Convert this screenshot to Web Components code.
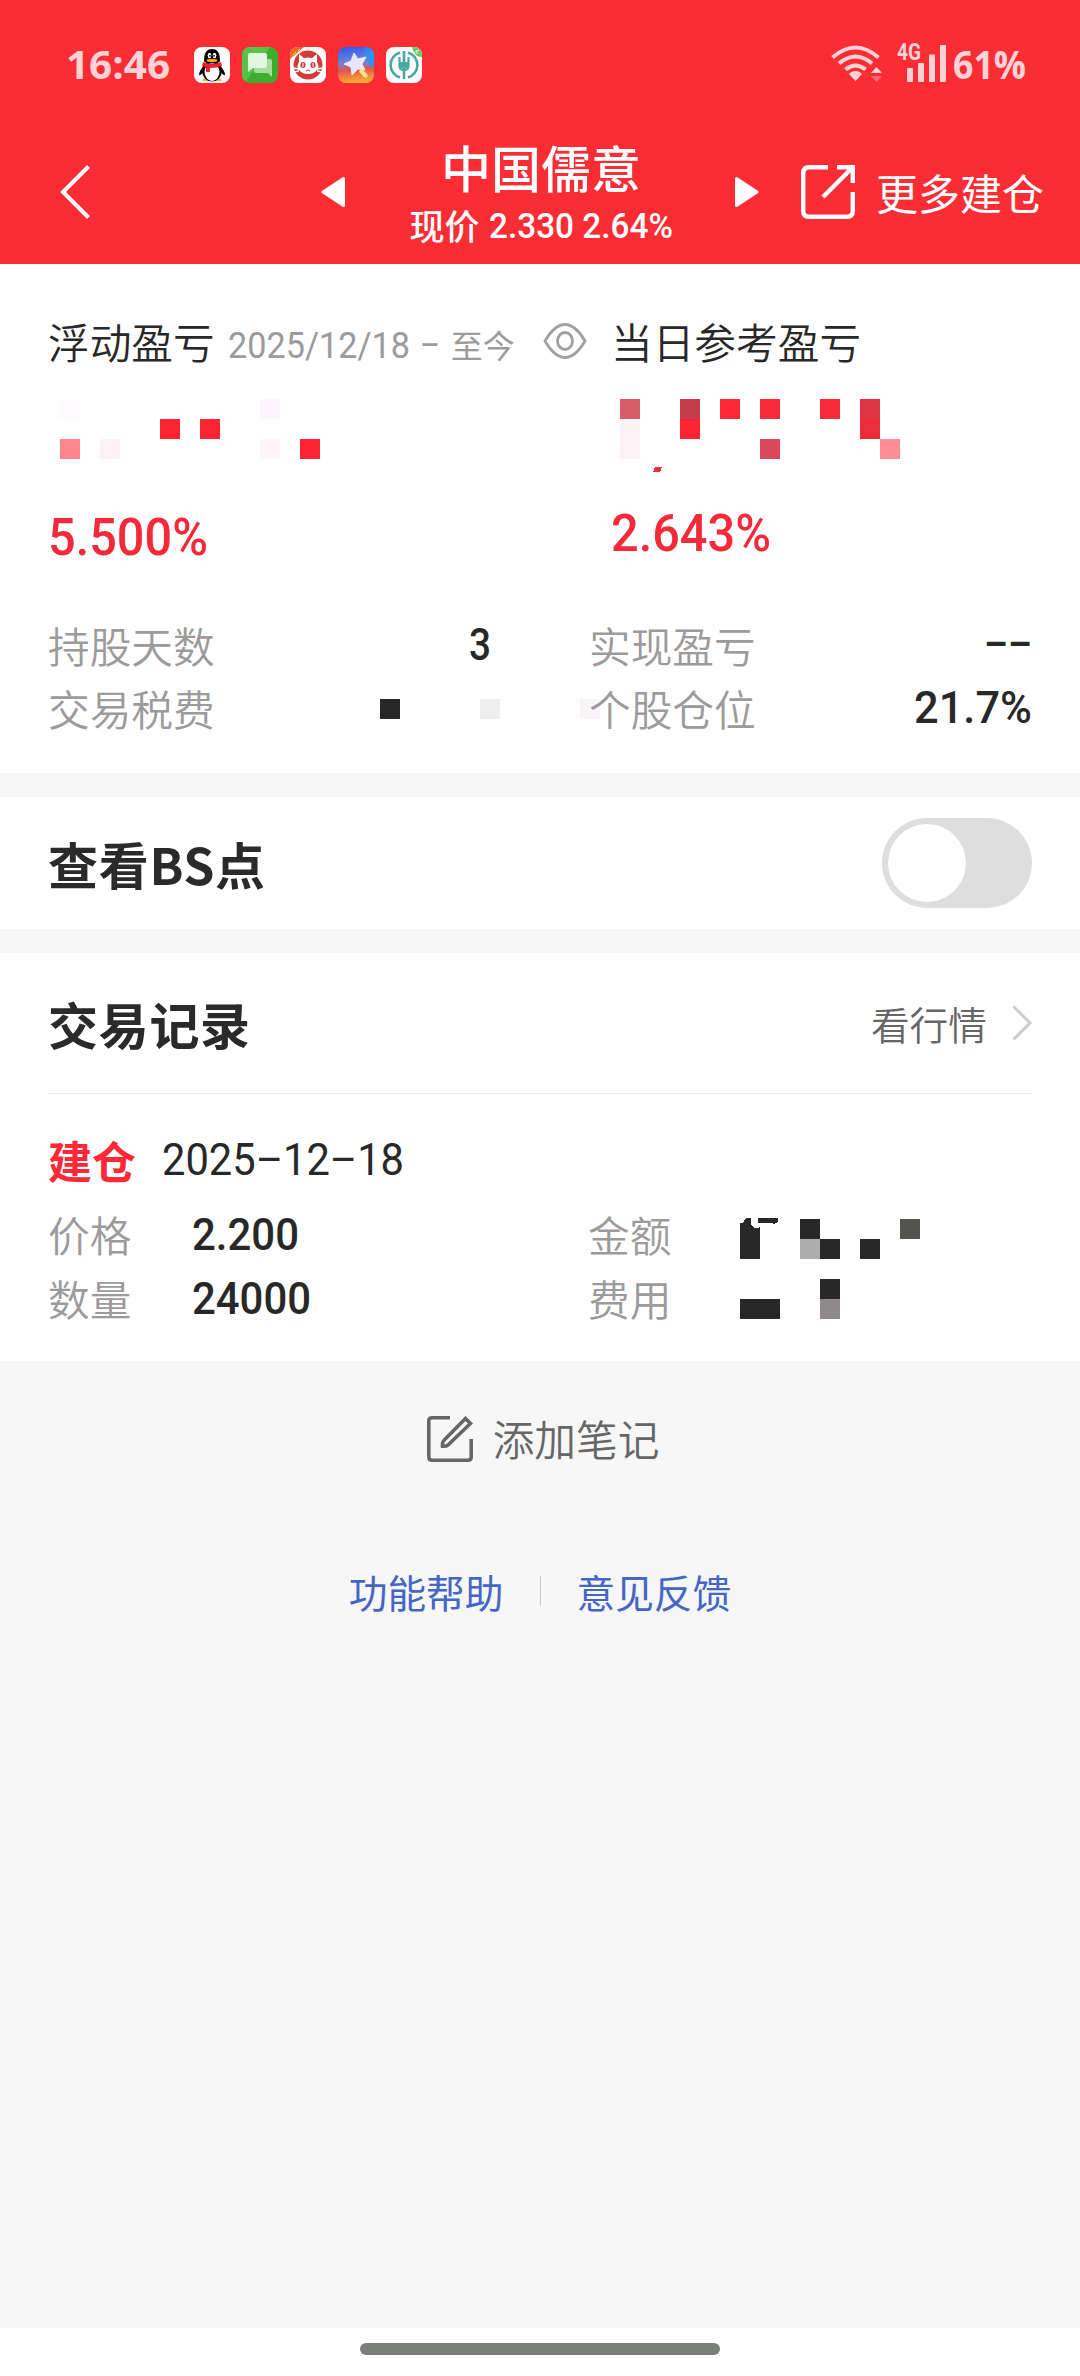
<!DOCTYPE html>
<html lang="zh-CN">
<head>
<meta charset="utf-8">
<title>中国儒意</title>
<style>
  body {
    margin: 0;
    width: 1080px;
    background: #f7f7f7;
    font-family: Roboto, "Noto Sans CJK SC", sans-serif;
    color: #282828;
  }
</style>
</head>
<body>
<stock-page></stock-page>

<script>
const CJK = '"Noto Sans CJK SC", sans-serif';

const ICONS = {
  qq: `<svg width="36" height="36" viewBox="0 0 36 36"><rect width="36" height="36" rx="8" fill="#fff"/>
    <path d="M9 32q4-3 9 0-2 3-7 2-4 0-2-2M18 32q5-3 9 0 2 2-2 2-5 1-7-2" fill="#f5b53d"/>
    <path d="M10.500 18Q5 24 5 28q2 1 4-3M25.500 18Q31 24 31 28q-2 1-4-3" fill="#000"/>
    <ellipse cx="18" cy="24" rx="10" ry="10.500" fill="#000"/><ellipse cx="18" cy="25" rx="7.500" ry="9" fill="#fff"/>
    <path d="M10 14C10 5 13 2 18 2s8 3 8 12c0 3-16 3-16 0" fill="#000"/>
    <ellipse cx="15.500" cy="8.500" rx="1.800" ry="2.700" fill="#fff"/><ellipse cx="20.500" cy="8.500" rx="1.800" ry="2.700" fill="#fff"/>
    <circle cx="16" cy="8.800" r=".9"/><circle cx="20" cy="8.800" r=".9"/>
    <ellipse cx="18" cy="13.500" rx="5.500" ry="1.700" fill="#f9a620"/>
    <path d="M9 15q9 4 18 0l1 4q-5 2-12 2v4h-4v-5l-4-1z" fill="#f31f2b"/></svg>`,
  sms: `<svg width="36" height="36" viewBox="0 0 36 36"><rect width="36" height="36" rx="8" fill="#3fae2f"/>
    <path d="M0 8a8 8 0 0 1 8-8h20L4 34q-4-2-4-6z" fill="#57c245"/>
    <path d="M12 12h16q2 0 2 2v16l-4-4H14q-2 0-2-2z" fill="#a6dc9c"/>
    <path d="M8 6h15q2 0 2 2v11q0 2-2 2H11l-5 4V8q0-2 2-2" fill="#e2f5df"/></svg>`,
  cat: `<svg width="36" height="36" viewBox="0 0 36 36"><rect width="36" height="36" rx="8" fill="#fff"/>
    <path d="M0 8a8 8 0 0 1 8-8h6L0 12z" fill="#ee6a1c"/><path d="M3 8l3-3m0 4 3-3m-1-2 2-2" stroke="#ffd6a8" stroke-width="1"/>
    <circle cx="18" cy="18" r="14.500" fill="#d13b3c"/>
    <path d="M9 15V7l5 4q4-1 8 0l5-4v8q3 5 0 8-3 4-9 4t-9-4q-3-3 0-8" fill="#fff"/>
    <ellipse cx="13" cy="18" rx="2.600" ry="3" fill="#d13b3c"/><ellipse cx="23" cy="18" rx="2.600" ry="3" fill="#d13b3c"/>
    <path d="M13 16v4M23 16v4" stroke="#fff"/><path d="M16 24l2-1 2 1" stroke="#d13b3c" fill="none"/>
    <path d="M3 21l6 1M3 25l6-1M33 21l-6 1M33 25l-6-1" stroke="#fff" stroke-width="1.500"/></svg>`,
  star: `<svg width="36" height="36" viewBox="0 0 36 36"><defs>
    <linearGradient id="a" x1=".3" y1="0" x2=".4" y2="1"><stop stop-color="#315bf0"/><stop offset=".4" stop-color="#6d83d8"/><stop offset=".65" stop-color="#e4574a"/><stop offset="1" stop-color="#fbb02f"/></linearGradient>
    <linearGradient id="b"><stop offset=".5" stop-color="#1c9bff" stop-opacity="0"/><stop offset="1" stop-color="#1c9bff"/></linearGradient></defs>
    <rect width="36" height="36" rx="8" fill="url(#a)"/><path d="M10 0h18a8 8 0 0 1 8 8v12L22 16z" fill="url(#b)"/>
    <path d="M16 6l4 6 8-2-4 7 3 6-7-1-6 6-1-8-7-3 7-3z" fill="#e9e6f8" stroke="#e9e6f8" stroke-linejoin="round"/>
    <path d="M23.500 24.500l4 4" stroke="#fbe38c" stroke-width="4.500" stroke-linecap="round"/></svg>`,
  bank: `<svg width="36" height="36" viewBox="0 0 36 36"><rect width="36" height="36" rx="8" fill="#fff"/>
    <path d="M26 0h2a8 8 0 0 1 8 8v2q-8 0-10-10" fill="#72c862"/><path d="M29 5l4-2m-2 0v4" stroke="#e3f6dd" fill="none"/>
    <path d="M14 5.500a13 13 0 0 0 0 25M22 5.500a13 13 0 0 1 0 25" fill="none" stroke="#46a8a0" stroke-width="2.600"/>
    <path d="M18 4v28" stroke="#46a8a0" stroke-width="2.600"/>
    <path d="M13.500 10v6h9v-6M13.500 15v4q0 4 4.500 4t4.500-4v-4" fill="none" stroke="#46a8a0" stroke-width="2.200"/>
    <path d="M14 16h8v4q-4 3-8 0z" fill="#46a8a0"/></svg>`,
  wifi: `<svg width="52" height="38" viewBox="0 0 52 38" fill="none" stroke="currentColor" stroke-width="4">
    <path d="M1.500 12.500q23-20 46 0M8 18.500q16.500-14 33 0M14.500 24.500q10-8 20 0"/>
    <path d="M24.500 26q4 0 6.500 3l-6.500 7-6.500-7q2.500-3 6.500-3" fill="currentColor" stroke="none"/>
    <path d="M40 28h11l-5.500-6z" fill="currentColor" stroke="none"/><path d="M40 31h11l-5.500 6z" fill="#fc6a70" stroke="none"/></svg>`,
  bars: `<svg width="39" height="37" viewBox="0 0 39 37" fill="currentColor">
    <rect y="23" width="6" height="14" rx="1"/><rect x="11" y="18" width="6" height="19" rx="1"/>
    <rect x="22" y="9.500" width="6" height="27.500" rx="1"/><rect x="33" width="6" height="37" rx="1"/></svg>`,
  back: `<svg width="32" height="56" viewBox="0 0 32 56"><path d="M28.500 2.500L3 28l25.500 25.500" fill="none" stroke="#fff" stroke-width="4"/></svg>`,
  prev: `<svg width="24" height="32" viewBox="0 0 24 32"><path d="M22.500 2.500v27L2 16z" fill="#fff" stroke="#fff" stroke-width="3" stroke-linejoin="round"/></svg>`,
  next: `<svg width="24" height="32" viewBox="0 0 24 32"><path d="M1.500 2.500v27L22 16z" fill="#fff" stroke="#fff" stroke-width="3" stroke-linejoin="round"/></svg>`,
  share: `<svg width="54" height="54" viewBox="0 0 54 54" fill="none" stroke="#fff" stroke-width="4.400">
    <path d="M27 2.200H8Q2.200 2.200 2.200 8v38q0 5.800 5.800 5.800h38q5.800 0 5.800-5.800V27"/><path d="M36 2.200h15.800V18M51 3L22 32"/></svg>`,
  eye: `<svg width="44" height="36" viewBox="0 0 44 36" fill="none" stroke="#a0a0a0" stroke-width="2.800">
    <path d="M2 18C9 6 15 1.500 22 1.500S35 6 42 18C35 30 29 34.500 22 34.500S9 30 2 18z" stroke-linejoin="round"/><ellipse cx="22" cy="18" rx="7.500" ry="8.500"/></svg>`,
  more: `<svg width="20" height="36" viewBox="0 0 20 36"><path d="M1.500 1.500L18 18 1.500 34.500" fill="none" stroke="#ccc" stroke-width="3"/></svg>`,
  note: `<svg width="46" height="46" viewBox="0 0 46 46" fill="none" stroke="#666" stroke-width="3.600">
    <path d="M23 1.800H5q-3.200 0-3.200 3.200v36q0 3.200 3.200 3.200h36q3.200 0 3.200-3.200V23"/>
    <path d="M38.500 2.500l5 5L21 29q-1.500 1.500-5.500 1.300-.3-4.300 1.500-6z"/></svg>`
};

class AppIcon extends HTMLElement {
  connectedCallback() {
    this.attachShadow({mode: 'open'}).innerHTML = `
      <style>
        :host { display: block; flex: none; }
        svg { display: block; }
      </style>
      ${ICONS[this.getAttribute('name')]}
    `;
  }
}
customElements.define('app-icon', AppIcon);

// Squeezes a line of figures to the width given in the "w" attribute
class FitText extends HTMLElement {
  connectedCallback() {
    const w = Number(this.getAttribute('w'));
    this.attachShadow({mode: 'open'}).innerHTML = `
      <style>
        :host { display: block; flex: none; width: ${w}px; white-space: nowrap; }
        span { display: inline-block; transform-origin: 0 50%; }
      </style>
      <span><slot></slot></span>
    `;
    const span = this.shadowRoot.querySelector('span');
    span.style.transform = `scaleX(${w / span.getBoundingClientRect().width})`;
  }
}
customElements.define('fit-text', FitText);

// Hidden amounts: cells="column,row,color ..." on a 20px grid
class PixelMask extends HTMLElement {
  connectedCallback() {
    const cells = (this.getAttribute('cells') || '').split(' ').map(c => {
      const [x, y, color] = c.split(',');
      return `<rect x="${x * 20}" y="${y * 20}" width="20" height="20" fill="#${color}"/>`;
    }).join('');
    const extra = this.hasAttribute('extra') ? `<path d="${this.getAttribute('extra')}" fill="${this.getAttribute('fill')}"/>` : '';
    this.attachShadow({mode: 'open'}).innerHTML = `
      <style>
        :host { display: block; flex: none; }
        svg { display: block; overflow: visible; }
      </style>
      <svg width="${this.getAttribute('w')}" height="${this.getAttribute('h')}" shape-rendering="crispEdges">${cells}${extra}</svg>
    `;
  }
}
customElements.define('pixel-mask', PixelMask);

class StatusBar extends HTMLElement {
  connectedCallback() {
    this.attachShadow({mode: 'open'}).innerHTML = `
      <style>
        :host {
          display: flex;
          align-items: center;
          height: 130px;
          box-sizing: border-box;
          padding: 0 54px 0 66px;
          color: #ffd3d6;
          font-family: "Open Sans", sans-serif;
          font-weight: 700;
          font-size: 40px;
          line-height: 50px;
        }
        .time, .battery { margin-top: -3px; }
        .apps { display: flex; gap: 12px; margin-left: 24px; }
        .signal { display: flex; margin: -2px 0 0 auto; }
        .net { font: 700 23px/22px Roboto, sans-serif; margin: -3px -14px 0 14px; }
        .battery { margin-left: 7px; }
      </style>
      <fit-text class="time" w="104">16:46</fit-text>
      <div class="apps">
        <app-icon name="qq"></app-icon>
        <app-icon name="sms"></app-icon>
        <app-icon name="cat"></app-icon>
        <app-icon name="star"></app-icon>
        <app-icon name="bank"></app-icon>
      </div>
      <div class="signal">
        <app-icon name="wifi"></app-icon>
        <fit-text class="net" w="24">4G</fit-text>
        <app-icon name="bars"></app-icon>
      </div>
      <fit-text class="battery" w="73">61%</fit-text>
    `;
  }
}
customElements.define('status-bar', StatusBar);

class NavBar extends HTMLElement {
  connectedCallback() {
    this.attachShadow({mode: 'open'}).innerHTML = `
      <style>
        :host {
          display: grid;
          grid-template-columns: 261px 24px 390px 24px 42px 54px 1fr;
          align-items: center;
          height: 124px;
          box-sizing: border-box;
          padding: 0 0 0 60px;
          color: #fff;
          font-weight: 500;
        }
        .title { text-align: center; padding-left: 2px; }
        h1 { margin: 0; font: 500 50px/60px ${CJK}; }
        .price { display: flex; justify-content: center; gap: 9px; font-size: 35px; line-height: 52px; padding-top: 4px; margin-bottom: -4px; }
        .price fit-text { margin-top: 1px; }
        .price b { font: 500 35px/50px ${CJK}; }
        .more { font: 400 42px/60px ${CJK}; padding-left: 21px; }
      </style>
      <app-icon name="back"></app-icon>
      <app-icon name="prev"></app-icon>
      <div class="title">
        <h1><slot name="name"></slot></h1>
        <div class="price"><b>现价</b><fit-text w="184"><slot name="price"></slot></fit-text></div>
      </div>
      <app-icon name="next"></app-icon>
      <span></span>
      <app-icon name="share"></app-icon>
      <div class="more"><slot name="action"></slot></div>
    `;
  }
}
customElements.define('nav-bar', NavBar);

class ProfitBlock extends HTMLElement {
  connectedCallback() {
    this.attachShadow({mode: 'open'}).innerHTML = `
      <style>
        :host { display: block; height: 256px; }
        .head { display: flex; align-items: center; height: 60px; font: 350 41.700px/60px ${CJK}; }
        .mask { margin-top: 28px; height: 60px; }
        .rate { color: #f52a39; font-weight: 500; font-size: 52px; line-height: 60px; margin-top: var(--rate-gap, 49px); }
      </style>
      <div class="head"><slot name="head"></slot></div>
      <div class="mask"><slot name="mask"></slot></div>
      <div class="rate"><slot name="rate"></slot></div>
    `;
  }
}
customElements.define('profit-block', ProfitBlock);

class DataRow extends HTMLElement {
  connectedCallback() {
    this.attachShadow({mode: 'open'}).innerHTML = `
      <style>
        :host { display: flex; align-items: center; height: 63px; justify-content: space-between; }
        :host([start]) { height: 64px; justify-content: flex-start; }
        .label { flex: none; color: #9c9a9b; font: 350 41.700px/60px ${CJK}; }
        :host([start]) .label { width: var(--label, 144px); }
        .value { font-weight: 500; font-size: 45px; line-height: 60px; margin-top: 1px; }
      </style>
      <div class="label">${this.getAttribute('label')}</div>
      <div class="value"><slot></slot></div>
    `;
  }
}
customElements.define('data-row', DataRow);

class ToggleSwitch extends HTMLElement {
  connectedCallback() {
    this.attachShadow({mode: 'open'}).innerHTML = `
      <style>
        :host {
          display: block;
          box-sizing: border-box;
          width: 150px;
          height: 90px;
          padding: 6px;
          border-radius: 45px;
          background: #dedede;
        }
        i { display: block; width: 78px; height: 78px; border-radius: 50%; background: #fff; }
      </style>
      <i></i>
    `;
  }
}
customElements.define('toggle-switch', ToggleSwitch);

class CardSection extends HTMLElement {
  connectedCallback() {
    this.attachShadow({mode: 'open'}).innerHTML = `
      <style>
        :host { display: block; box-sizing: border-box; padding: 0 48px; background: #fff; }
        header { display: flex; align-items: center; justify-content: space-between; height: var(--head, 132px); }
        h2 { margin: 0; font: 700 50px/60px ${CJK}; letter-spacing: .7px; color: #2a2a2a; }
        :host([line]) header { border-bottom: 1px solid #ececec; }
      </style>
      <header><h2>${this.getAttribute('heading')}</h2><slot name="side"></slot></header>
      <slot></slot>
    `;
  }
}
customElements.define('card-section', CardSection);

class StockPage extends HTMLElement {
  connectedCallback() {
    this.attachShadow({mode: 'open'}).innerHTML = `
      <style>
        :host { display: flex; flex-direction: column; width: 1080px; height: 2376px; overflow: hidden; }
        .top { background: #fa2d35; height: 264px; }
        .summary { box-sizing: border-box; height: 509px; padding: 47px 48px 0; background: #fff; }
        .profits { display: grid; grid-template-columns: 563px 1fr; }
        .details { display: grid; grid-template-columns: 443px 443px; column-gap: 98px; margin-top: 46px; }
        .since { display: flex; align-items: center; color: #9c9a9b; font: 400 36px/60px Roboto, sans-serif; margin: 9px 0 0 13px; }
        .since b { font: 400 32px/60px ${CJK}; margin: -3px 0 0 11px; }
        .eye { margin: 0 0 0 28px; }
        .bs, .records { margin-top: 24px; }
        .bs { height: 132px; }
        .records { height: 408px; --head: 140px; }
        .link { display: flex; align-items: center; gap: 25px; color: #666; font: 350 38.700px/60px ${CJK}; }
        .open { display: flex; align-items: center; height: 64px; margin: 34px 0 10px; font-size: 45px; line-height: 60px; }
        .open b { color: #ff2836; font: 700 44px/60px ${CJK}; margin-right: 26px; }
        .entry { display: grid; grid-template-columns: 540px 1fr; }
        .wide { --label: 152px; }
        .note { display: flex; align-items: center; justify-content: center; gap: 20px; padding-left: 6px; height: 60px; margin-top: 47px; color: #666; font: 350 41.700px/60px ${CJK}; }
        .note app-icon { margin-top: 2px; }
        .help { display: flex; align-items: center; justify-content: center; gap: 36px; height: 60px; margin-top: 93px; color: #4466c4; font: 400 38.700px/60px ${CJK}; }
        .help i { width: 1px; height: 30px; background: #c8c8c8; }
        .home { display: flex; justify-content: center; align-items: flex-start; box-sizing: border-box; height: 48px; margin-top: auto; padding-top: 15px; background: #fff; }
        .home i { width: 360px; height: 12px; border-radius: 6px; background: #7c7e7a; }
      </style>
      <div class="top">
        <status-bar></status-bar>
        <nav-bar>
          <span slot="name">中国儒意</span>
          <span slot="price">2.330 2.64%</span>
          <span slot="action">更多建仓</span>
        </nav-bar>
      </div>
      <div class="summary">
        <div class="profits">
          <profit-block>
            <span slot="head">浮动盈亏</span>
            <div slot="head" class="since"><fit-text w="182">2025/12/18</fit-text><fit-text w="20" style="margin-left:10px">–</fit-text><b>至今</b></div>
            <app-icon slot="head" class="eye" name="eye"></app-icon>
            <pixel-mask slot="mask" style="margin-left:12px" w="280" h="60" cells="0,0,fffafe 10,0,fef6ff 5,1,ff2432 7,1,ff2432 0,2,ff868f 2,2,fff2f7 10,2,fff5f6 12,2,ff2432"></pixel-mask>
            <fit-text slot="rate" w="160">5.500%</fit-text>
          </profit-block>
          <profit-block style="--rate-gap:45px">
            <span slot="head">当日参考盈亏</span>
            <pixel-mask slot="mask" style="margin-left:9px" w="280" h="60" cells="0,0,d75d68 3,0,c43c4b 5,0,ff2839 7,0,f9283b 10,0,f9283b 12,0,dd3642 0,1,fff2f6 3,1,ff2432 12,1,ee2b3a 0,2,fff2f6 7,2,dc495b 13,2,ff8d93" extra="M35 68h7l-2 5h-7z" fill="#ee2b3a"></pixel-mask>
            <fit-text slot="rate" w="160">2.643%</fit-text>
          </profit-block>
        </div>
        <div class="details">
          <data-row label="持股天数"><fit-text w="22">3</fit-text></data-row>
          <data-row label="实现盈亏"><fit-text w="48">––</fit-text></data-row>
          <data-row label="交易税费"><pixel-mask w="111" h="18" cells="0,0,282828 5,0,eeeeee 10,0,f8f4f8"></pixel-mask></data-row>
          <data-row label="个股仓位"><fit-text w="118">21.7%</fit-text></data-row>
        </div>
      </div>
      <card-section class="bs" heading="查看BS点">
        <toggle-switch slot="side"></toggle-switch>
      </card-section>
      <card-section class="records" heading="交易记录" line>
        <div slot="side" class="link">看行情 <app-icon name="more"></app-icon></div>
        <div class="open"><b>建仓</b><fit-text w="242">2025–12–18</fit-text></div>
        <div class="entry">
          <data-row start label="价格"><fit-text w="107">2.200</fit-text></data-row>
          <data-row start class="wide" label="金额"><pixel-mask w="160" h="32" cells="3,0,282828 8,0,51544f 3,1,aeaeae 4,1,282828 6,1,282828" extra="M0 4h3l3-5h5v7q4 5 9 2v32H0zM18-1h20v4l-4 2-2-1H18z" fill="#282828"></pixel-mask></data-row>
          <data-row start label="数量"><fit-text w="119">24000</fit-text></data-row>
          <data-row start class="wide" label="费用"><pixel-mask w="160" h="40" cells="4,0,282828 0,1,282828 1,1,282828 4,1,8d898d"></pixel-mask></data-row>
        </div>
      </card-section>
      <div class="note"><app-icon name="note"></app-icon>添加笔记</div>
      <div class="help"><span>功能帮助</span><i></i><span>意见反馈</span></div>
      <div class="home"><i></i></div>
    `;
  }
}
customElements.define('stock-page', StockPage);
</script>
</body>
</html>
